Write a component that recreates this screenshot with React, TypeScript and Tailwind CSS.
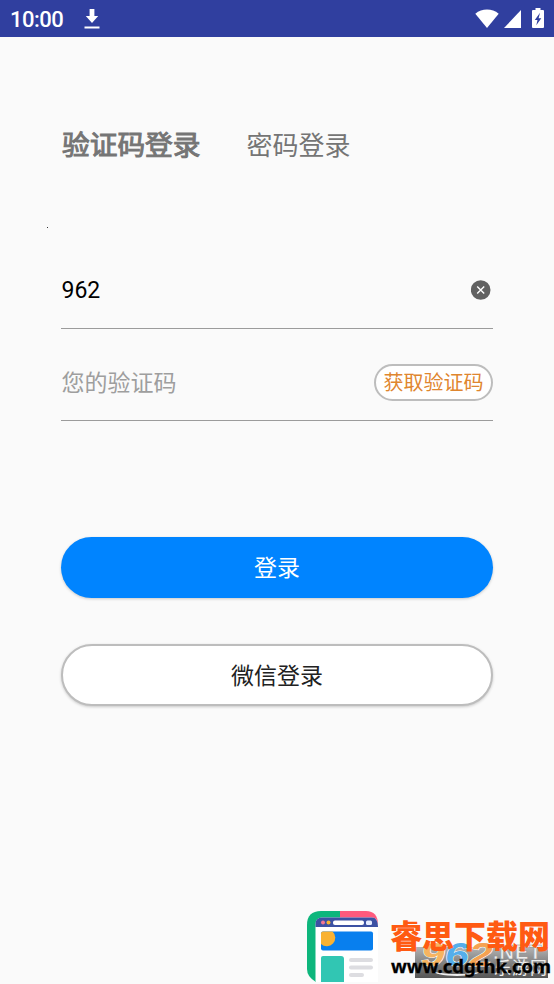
import React, { useState } from 'react';
import { clsx } from 'clsx';

function StatusBar() {
  return (
    <div className="flex h-[37px] items-center bg-[#303f9f] pl-[10px] pr-[10px] text-white">
      <span className="mt-[2px] w-[55px] whitespace-nowrap text-[22px] font-medium leading-none tracking-[-0.5px]">10:00</span>
      <svg className="ml-[19px] mt-px h-[22px] w-[16px]" viewBox="0 0 16 22" fill="currentColor">
        <path d="M5.6 1h4.8v7h3.8L8 15 1.8 8h3.8z" />
        <path d="M0.5 18.5h15v2h-15z" />
      </svg>
      <div className="ml-auto flex items-center">
        <svg className="h-[20px] w-[24px]" viewBox="0 0 24 20" fill="currentColor">
          <path d="M0.3 4.8C7 -0.8 17 -0.8 23.7 4.8L12 19z" />
        </svg>
        <svg className="ml-[5px] h-[18px] w-[17px]" viewBox="0 0 17 18" fill="currentColor">
          <path d="M17 0v18H0z" />
        </svg>
        <svg className="ml-[11px] h-[21px] w-[12px]" viewBox="0 0 12 21">
          <path
            d="M3.5 0h5v2H11a1 1 0 0 1 1 1v16a1 1 0 0 1-1 1H1a1 1 0 0 1-1-1V3a1 1 0 0 1 1-1h2.500z"
            fill="currentColor"
          />
          <path d="M8 4.800 2.800 12h2.700l-1.200 5.200L9.300 10.300H6.600z" fill="#303f9f" />
        </svg>
      </div>
    </div>
  );
}

function SiteLogo() {
  return (
    <svg className="h-[71px] w-[71px]" viewBox="0 0 71 71">
      <defs>
        <clipPath id="logo-shape">
          <path d="M14 0H59Q71 0 71 14V71H9Q0 66 0 58V14Q0 0 14 0z" />
        </clipPath>
      </defs>
      <g clipPath="url(#logo-shape)">
        <path d="M0 0h35v71H0z" fill="#0db67c" />
        <path d="M33 0h38v20H33z" fill="#ff5a7d" />
        <path d="M8.500 71V13Q8.500 6.500 15 6.500H65Q71 6.500 71 15V71z" fill="#fff" />
        <path d="M8.500 16V13Q8.500 6.500 15 6.500H65Q71 6.500 71 16z" fill="#3c51a3" />
        <circle cx="16" cy="11.500" r="2" fill="#f37692" />
        <circle cx="21.500" cy="11.500" r="2" fill="#f7b32f" />
        <rect x="26" y="9.500" width="31" height="4.500" rx="2" fill="#fff" />
        <rect x="59" y="9.500" width="6" height="4.500" rx="1.500" fill="#e5ecff" />
        <rect x="14" y="20.500" width="52" height="19" rx="2" fill="#087fee" />
        <path d="M14 22.500q0-2 2-2h9.500a8.200 8.200 0 1 1-11.500 12.500z" fill="#f9b233" />
        <path d="M14 71V47q0-2 2-2h18q3 0 3 3v23z" fill="#31c6b3" />
        <rect x="42" y="47" width="24" height="4" rx="2" fill="#dddde1" />
        <rect x="42" y="54.500" width="24" height="4" rx="2" fill="#dddde1" />
        <rect x="42" y="62" width="15" height="4" rx="2" fill="#dddde1" />
      </g>
    </svg>
  );
}

function Watermark() {
  return (
    <div className="absolute left-[307px] top-[911px] flex whitespace-nowrap">
      <SiteLogo />
      <div className="relative ml-[12px] h-[73px] w-[162px]">
        {/* grey plate with the older site mark */}
        <div className="absolute left-[25px] top-[36px] h-[31px] w-[133px] bg-gradient-to-b from-[#b4b4b4] to-[#555]" />
        <div className="absolute left-[42px] top-[53px] h-[12px] w-[50px] rounded-[50%] border-b-2 border-[#eee]" />
        <div className="absolute left-[31px] top-[26px] flex gap-[3px] font-['Liberation_Sans'] text-[34px] font-bold italic leading-none [-webkit-text-stroke:1px_#fff] [paint-order:stroke]">
          <span className="w-[21px] origin-left scale-x-125 text-[#f6b460]">9</span>
          <span className="w-[21px] origin-left scale-x-125 text-[#55aeea]">6</span>
          <span className="w-[21px] origin-left scale-x-125 text-[#f5a252]">2</span>
        </div>
        <span className="absolute left-[103px] top-[31px] font-['Liberation_Sans'] text-[20px] font-bold leading-none tracking-[1px] text-[#eee] [-webkit-text-stroke:0.5px_#888]">
          .NET
        </span>
        <span className="absolute left-[104px] top-[49px] text-[17px] leading-none tracking-[1px] text-[#eee]">乐游网</span>
        <span className="absolute left-0 top-[10px] text-[32px] font-black leading-[32px] text-[#ff5a12]">睿思下载网</span>
        <span className="absolute left-[1px] top-[45px] font-['Noto_Sans'] text-[18.500px] font-bold leading-[20px] tracking-[-0.050px] text-black [-webkit-text-stroke:0.3px_#000]">
          www.cdgthk.com
        </span>
      </div>
    </div>
  );
}

export default function App() {
  const [mode, setMode] = useState('code');
  const [phone, setPhone] = useState('962');
  const [code, setCode] = useState('');

  const tabs = [
    { id: 'code', title: '验证码登录' },
    { id: 'password', title: '密码登录' }
  ];

  return (
    <div className="relative h-[984px] w-[554px] overflow-hidden bg-[#fafafa] font-['Roboto','Noto_Sans_CJK_SC',sans-serif]">
      <StatusBar />

      <main className="px-[61px] pt-[85px]">
        <div className="flex h-[48px] items-center gap-[46px] pl-px text-[#757575]">
          {tabs.map((tab) => (
            <button
              key={tab.id}
              onClick={() => setMode(tab.id)}
              className={clsx(
                'whitespace-nowrap leading-none',
                mode === tab.id ? 'text-[27.700px] [-webkit-text-stroke:1px_#757575]' : 'text-[26px]'
              )}
            >
              {tab.title}
            </button>
          ))}
        </div>

        <div className="-ml-[14px] mt-[57px] h-px w-px bg-[#333]" />

        <div className="mt-[23px] flex h-[78px] items-center border-b border-[#9b9b9b]">
          <input
            value={phone}
            onChange={(e) => setPhone(e.target.value)}
            className="mt-[4px] w-[300px] bg-transparent pl-[0.500px] text-[23px] text-black outline-none"
          />
          <button className="ml-auto mr-[2px]" onClick={() => setPhone('')}>
            <svg className="h-[20px] w-[20px]" viewBox="0 0 20 20">
              <circle cx="9.700" cy="10" r="9.800" fill="#616161" />
              <path d="M6.200 6.500l7 7M13.200 6.500l-7 7" stroke="#fff" strokeWidth="1.400" />
            </svg>
          </button>
        </div>

        <div className="flex h-[92px] items-center border-b border-[#9b9b9b] pt-[15px]">
          <input
            value={code}
            placeholder="您的验证码"
            onChange={(e) => setCode(e.target.value)}
            className="mt-[5px] w-[300px] bg-transparent pl-[0.500px] text-[23px] text-black outline-none placeholder:text-[#9e9e9e]"
          />
          <button className="ml-auto flex h-[37px] w-[119px] items-center justify-center whitespace-nowrap rounded-full border-2 border-[#bdbdbd] bg-white pt-[2px] text-[20px] leading-none text-[#df862f]">
            获取验证码
          </button>
        </div>

        <button className="mt-[116px] block h-[61px] w-full rounded-full bg-[#0084ff] pt-[2px] text-[23px] leading-none text-white shadow-[0_1px_3px_rgba(0,0,0,0.2)]">
          登录
        </button>
        <button className="mt-[46px] block h-[62px] w-full rounded-full border-2 border-[#bdbdbd] bg-white pt-[2px] text-[23px] leading-none text-[#212121] shadow-[0_1px_3px_rgba(0,0,0,0.2)]">
          微信登录
        </button>
      </main>

      <Watermark />
    </div>
  );
}
